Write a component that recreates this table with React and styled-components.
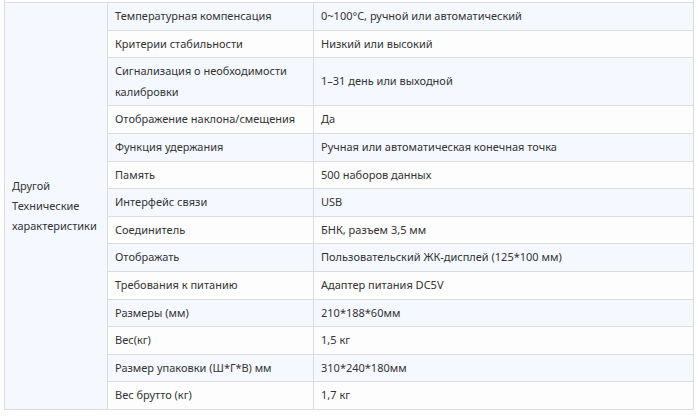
import styled, { createGlobalStyle } from "styled-components";

const rows = [
    ["Температурная компенсация", "0~100°C, ручной или автоматический"],
    ["Критерии стабильности", "Низкий или высокий"],
    ["Сигнализация о необходимости калибровки", "1–31 день или выходной"],
    ["Отображение наклона/смещения", "Да"],
    ["Функция удержания", "Ручная или автоматическая конечная точка"],
    ["Память", "500 наборов данных"],
    ["Интерфейс связи", "USB"],
    ["Соединитель", "БНК, разъем 3,5 мм"],
    ["Отображать", "Пользовательский ЖК-дисплей (125*100 мм)"],
    ["Требования к питанию", "Адаптер питания DC5V"],
    ["Размеры (мм)", "210*188*60мм"],
    ["Вес(кг)", "1,5 кг"],
    ["Размер упаковки (Ш*Г*В) мм", "310*240*180мм"],
    ["Вес брутто (кг)", "1,7 кг"],
];

const App = () => {
    return (
        <>
            <GlobalStyle />
            <StyledFrame>
                <StyledTable>
                    <colgroup>
                        <col style={{ width: 103 }} />
                        <col style={{ width: 206 }} />
                        <col />
                    </colgroup>
                    <tbody>
                        {rows.map(([name, value], i) => (
                            <StyledRow key={name} $shaded={i % 2 === 0}>
                                {i === 0 && (
                                    <StyledGroupCell rowSpan={rows.length}>
                                        Другой<br />Технические<br />характеристики
                                    </StyledGroupCell>
                                )}
                                <StyledCell>{name}</StyledCell>
                                <StyledCell>{value}</StyledCell>
                            </StyledRow>
                        ))}
                    </tbody>
                </StyledTable>
            </StyledFrame>
        </>
    )
}

const GlobalStyle = createGlobalStyle`
    body {
        margin: 0;
        background: #ffffff;
        font-family: "Noto Sans", "Open Sans", sans-serif;
        font-size: 11px;
        color: #333333;
    }
`

const StyledFrame = styled.div`
    margin: 0 4px;
    padding-top: 2px;
    border-left: 1px solid #dcdcdc;
    border-right: 1px solid #dcdcdc;
    width: 688px;
`

const StyledTable = styled.table`
    border-collapse: collapse;
    table-layout: fixed;
    margin-left: -1px;
    width: calc(100% + 2px);
`

const StyledRow = styled.tr`
    background: ${(p) => (p.$shaded ? "#f5f9ff" : "#fdfdfd")};
`

const StyledCell = styled.td`
    border: 1px solid #dcdcdc;
    padding: 3px 7px;
    line-height: 20.6px;
    vertical-align: middle;
    text-align: left;
`

const StyledGroupCell = styled(StyledCell)`
    background: #f5f9ff;
    line-height: 20px;
`

export default App;
